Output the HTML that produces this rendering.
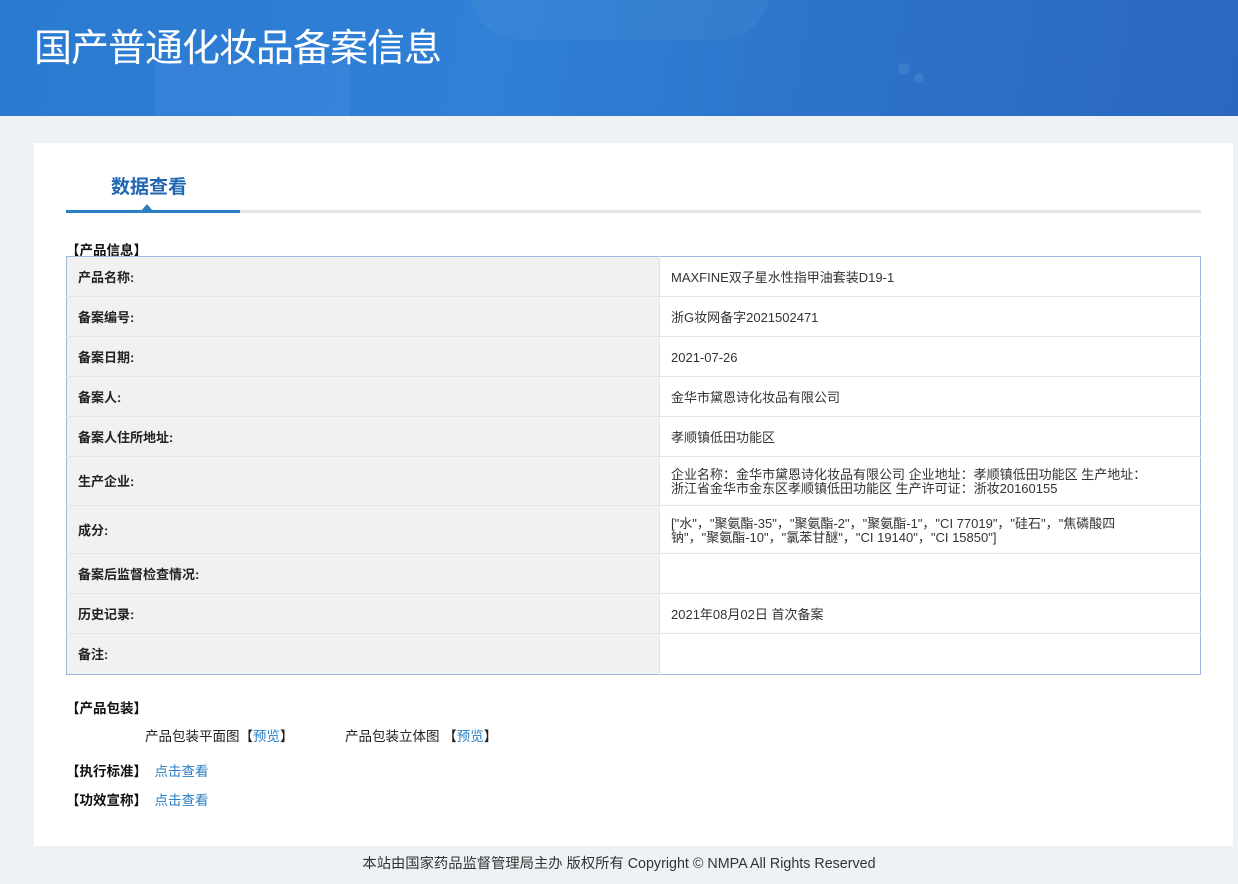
<!DOCTYPE html><html><head><meta charset="utf-8"><style>
body{margin:0;width:1238px;height:884px;background:#eef2f5;font-family:"Liberation Sans","Noto Sans CJK SC",sans-serif;position:relative;overflow:hidden;color:#333}
.hd{position:absolute;left:0;top:0;width:1238px;height:116px;background:linear-gradient(100deg,#2a7ad0 0%,#2f80d6 40%,#2c72c8 70%,#2b67bf 100%);overflow:hidden}
.hd h1{position:absolute;left:34px;top:17px;margin:0;font-size:38px;font-weight:normal;color:#fff;letter-spacing:-1px;font-family:"Noto Sans CJK SC",sans-serif}
.panel{position:absolute;left:34px;top:143px;width:1199px;height:703px;background:#fff}
.tab{position:absolute;left:77px;top:29px;font-size:19px;font-weight:bold;color:#1f66b3}
.line{position:absolute;left:32px;top:67px;width:1135px;height:3px;background:#e6e6e6}
.line i{position:absolute;left:0;top:0;width:174px;height:3px;background:#2c7ec5}
.tri{position:absolute;left:107px;top:61px;width:0;height:0;border-left:6px solid transparent;border-right:6px solid transparent;border-bottom:7px solid #2c7ec5}
.b{position:absolute;font-size:13.5px;font-weight:bold;color:#111}
table{position:absolute;left:32px;top:113px;width:1135px;border-collapse:collapse;border:1px solid #9fb8e0;font-size:13px}
td{border-bottom:1px solid #e3e3e3;padding:2px 11px 0;height:37px;line-height:14px;box-sizing:content-box}
td.l{width:570px;background:#f1f1f1;font-weight:bold;color:#222;border-right:1px solid #e3e3e3}
td.v{color:#333}
a{color:#2a7fc6;text-decoration:none}
.t{position:absolute;font-size:13.5px;color:#222}
.ft{position:absolute;left:0;top:852px;width:1238px;text-align:center;font-size:14.3px;color:#333}
</style></head><body>
<div class="hd">
<div style="position:absolute;left:155px;top:60px;width:195px;height:80px;background:rgba(80,140,230,.3)"></div>
<div style="position:absolute;left:470px;top:-60px;width:300px;height:100px;border-radius:50px;background:rgba(255,255,255,.04)"></div>
<div style="position:absolute;left:898px;top:63px;width:12px;height:12px;border-radius:6px;background:rgba(255,255,255,.08)"></div>
<div style="position:absolute;left:914px;top:73px;width:10px;height:10px;border-radius:5px;background:rgba(255,255,255,.08)"></div>
<h1>国产普通化妆品备案信息</h1></div>
<div class="panel">
<div class="tab">数据查看</div>
<div class="line"><i></i></div><div class="tri"></div>
<div class="b" style="left:32px;top:96px">【产品信息】</div>
<table>
<tr><td class="l">产品名称:</td><td class="v">MAXFINE双子星水性指甲油套装D19-1</td></tr>
<tr><td class="l">备案编号:</td><td class="v">浙G妆网备字2021502471</td></tr>
<tr><td class="l">备案日期:</td><td class="v">2021-07-26</td></tr>
<tr><td class="l">备案人:</td><td class="v">金华市黛恩诗化妆品有限公司</td></tr>
<tr><td class="l">备案人住所地址:</td><td class="v">孝顺镇低田功能区</td></tr>
<tr><td class="l" style="height:46px">生产企业:</td><td class="v">企业名称：金华市黛恩诗化妆品有限公司 企业地址：孝顺镇低田功能区 生产地址：<br>浙江省金华市金东区孝顺镇低田功能区 生产许可证：浙妆20160155</td></tr>
<tr><td class="l" style="height:45px">成分:</td><td class="v">["水"，"聚氨酯-35"，"聚氨酯-2"，"聚氨酯-1"，"CI 77019"，"硅石"，"焦磷酸四<br>钠"，"聚氨酯-10"，"氯苯甘醚"，"CI 19140"，"CI 15850"]</td></tr>
<tr><td class="l">备案后监督检查情况:</td><td class="v"></td></tr>
<tr><td class="l">历史记录:</td><td class="v">2021年08月02日 首次备案</td></tr>
<tr><td class="l" style="border-bottom:none;height:38px">备注:</td><td class="v" style="border-bottom:none"></td></tr>
</table>
<div class="b" style="left:32px;top:554px">【产品包装】</div>
<div class="t" style="left:111px;top:582px">产品包装平面图【<a>预览</a>】</div>
<div class="t" style="left:311px;top:582px">产品包装立体图 【<a>预览</a>】</div>
<div class="b" style="left:32px;top:617px">【执行标准】 &nbsp;<a style="font-weight:normal">点击查看</a></div>
<div class="b" style="left:32px;top:646px">【功效宣称】 &nbsp;<a style="font-weight:normal">点击查看</a></div>
</div>
<div class="ft">本站由国家药品监督管理局主办 版权所有 Copyright © NMPA All Rights Reserved</div>
</body></html>
